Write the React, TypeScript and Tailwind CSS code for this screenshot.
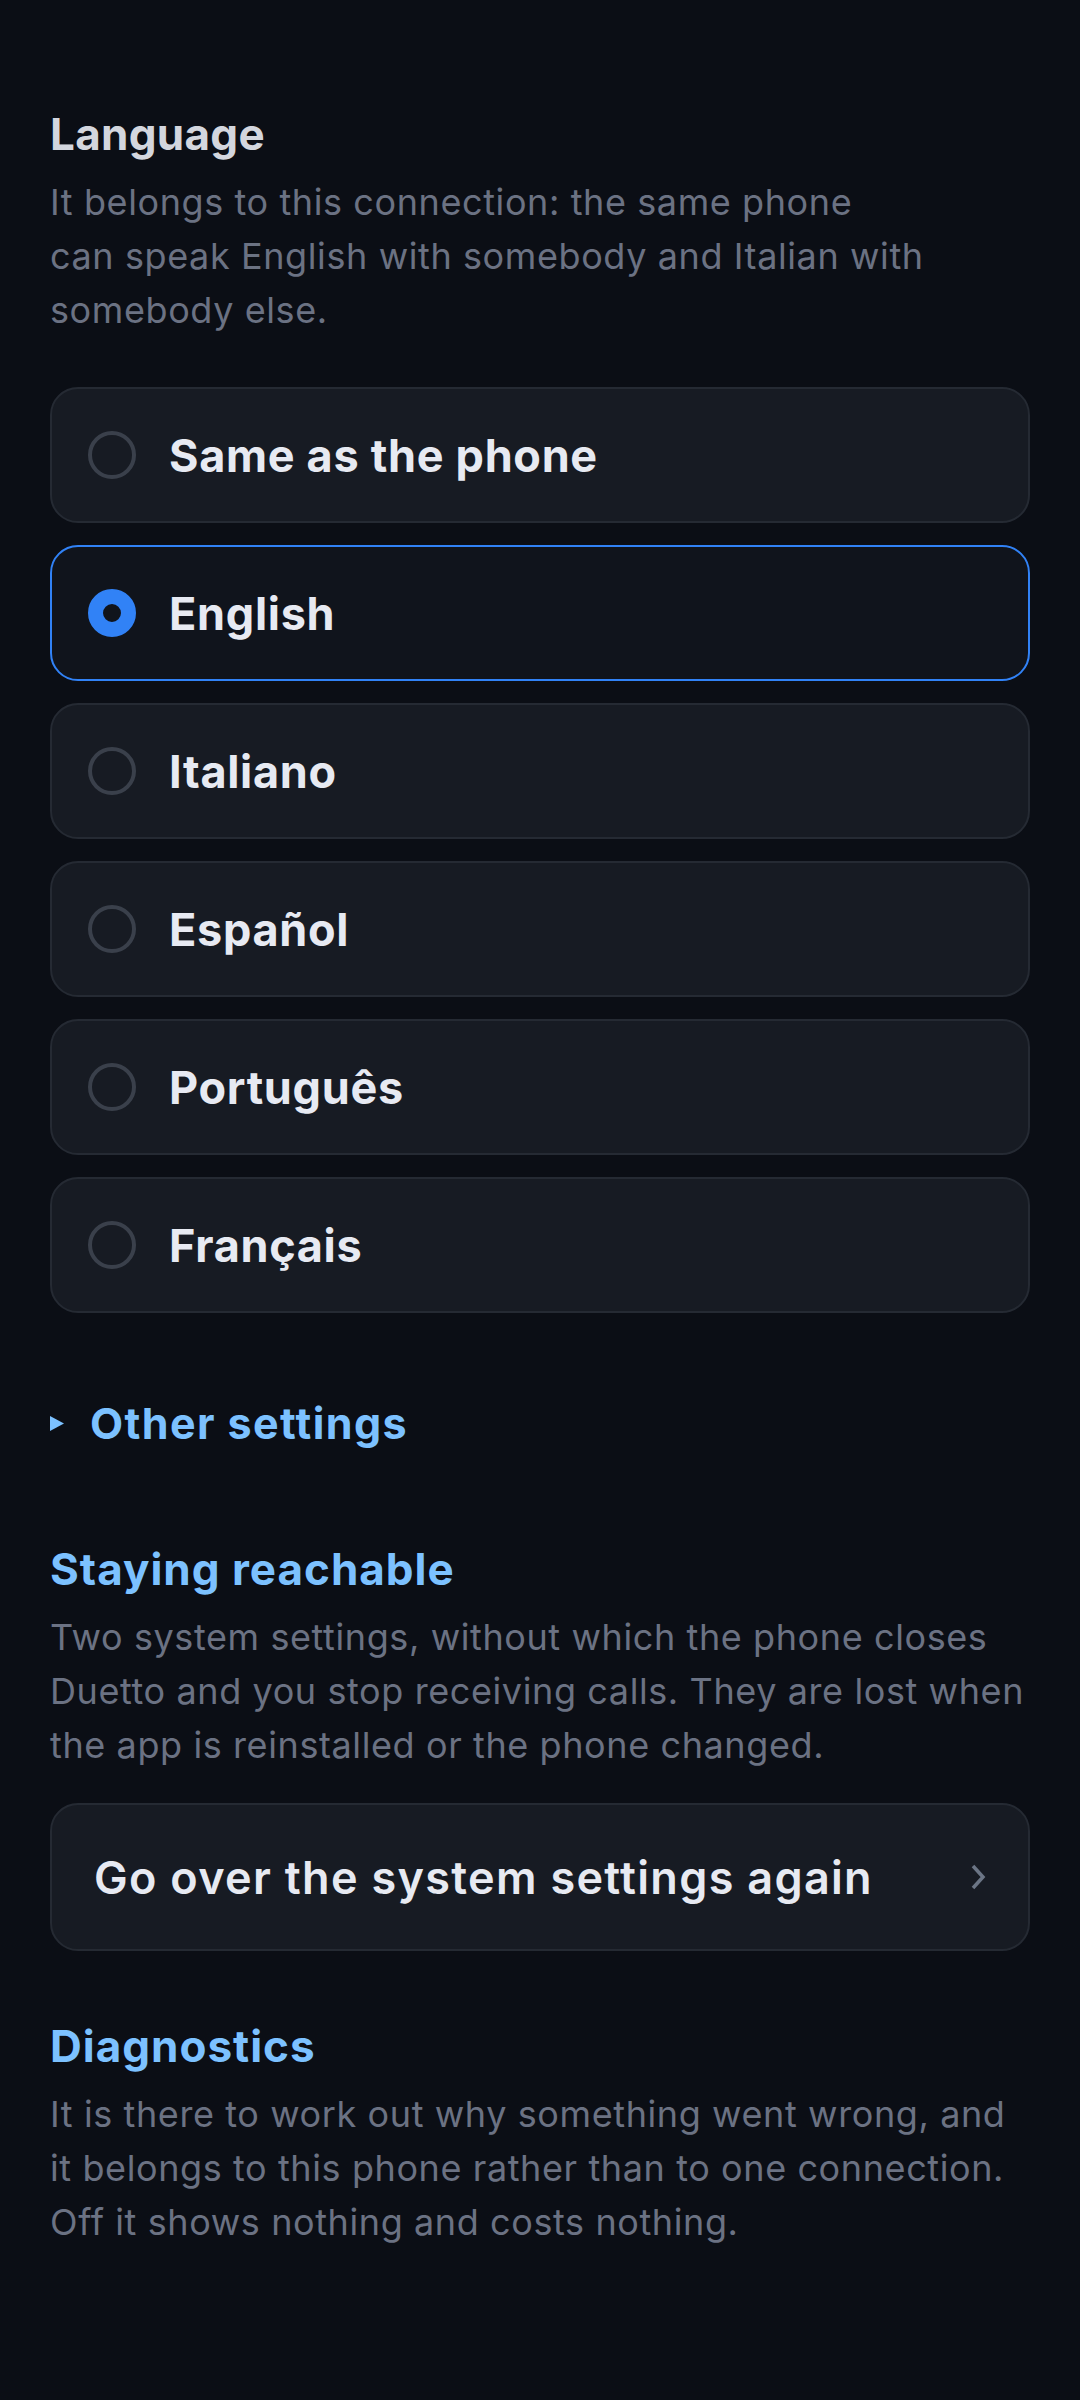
import React from 'react';

const languages = [
    { label: 'Same as the phone', selected: false },
    { label: 'English', selected: true },
    { label: 'Italiano', selected: false },
    { label: 'Español', selected: false },
    { label: 'Português', selected: false },
    { label: 'Français', selected: false },
];

const Radio: React.FC<{ on: boolean }> = ({ on }) =>
    on ? (
        <span className='w-[48px] h-[48px] shrink-0 rounded-full border-[15px] border-[#3182f6] bg-[#10141c]' />
    ) : (
        <span className='w-[48px] h-[48px] shrink-0 rounded-full border-[4px] border-[#3a404b]' />
    );

const App: React.FC = () => {
    return (
        <div className="min-h-[2400px] w-full bg-[#0b0e15] font-['Inter',sans-serif] px-[50px] pt-[106px] pb-20">
            <h2 className='text-[44px] leading-[56px] font-bold text-[#d3d6de] tracking-[0.3px]'>Language</h2>
            <p className='mt-[13px] text-[36px] leading-[54px] text-[#6b7283] tracking-[0.6px]'>
                It belongs to this connection: the same phone
                <br />
                can speak English with somebody and Italian with somebody else.
            </p>

            <div className='mt-[50px] flex flex-col gap-[22px]'>
                {languages.map((l) => (
                    <div
                        key={l.label}
                        className={
                            l.selected
                                ? 'h-[136px] flex items-center gap-[33px] px-[36px] rounded-[28px] border-2 border-[#3182f6] bg-[#10141c]'
                                : 'h-[136px] flex items-center gap-[33px] px-[36px] rounded-[28px] border-2 border-[#252a33] bg-[#171b23]'
                        }
                    >
                        <Radio on={l.selected} />
                        <span className='text-[45px] leading-none font-bold text-[#e7eaf2] tracking-[0.7px]'>{l.label}</span>
                    </div>
                ))}
            </div>

            <div className='mt-[84px] flex items-center gap-[26px] h-[52px]'>
                <svg width='14' height='15' viewBox='0 0 14 15' className='shrink-0'>
                    <polygon points='0,0 14,7.5 0,15' fill='#7cc1ff' />
                </svg>
                <span className='text-[43px] leading-[52px] font-bold text-[#7cc1ff] tracking-[1.4px]'>Other settings</span>
            </div>

            <h2 className='mt-[92px] text-[44px] leading-[56px] font-bold text-[#7cc1ff] tracking-[1px]'>Staying reachable</h2>
            <p className='mt-[13px] text-[36px] leading-[54px] text-[#6b7283] tracking-[0.6px]'>
                Two system settings, without which the phone closes Duetto and you stop receiving calls. They are lost when the app is reinstalled or the phone changed.
            </p>

            <button className='mt-[31px] w-full h-[148px] flex items-center justify-between pl-[42px] pr-[42px] rounded-[28px] border-2 border-[#252a33] bg-[#171b23] text-left'>
                <span className='text-[45px] leading-none font-semibold text-[#e7eaf2] tracking-[1.3px]'>Go over the system settings again</span>
                <svg width='16' height='26' viewBox='0 0 16 26' className='shrink-0'>
                    <polyline points='3,2 13,13 3,24' fill='none' stroke='#6b7585' strokeWidth='3.5' />
                </svg>
            </button>

            <h2 className='mt-[67px] text-[44px] leading-[56px] font-bold text-[#7cc1ff] tracking-[1px]'>Diagnostics</h2>
            <p className='mt-[13px] text-[36px] leading-[54px] text-[#6b7283] tracking-[0.6px]'>
                It is there to work out why something went wrong, and it belongs to this phone rather than to one connection. Off it shows nothing and costs nothing.
            </p>
        </div>
    );
};

export default App;
